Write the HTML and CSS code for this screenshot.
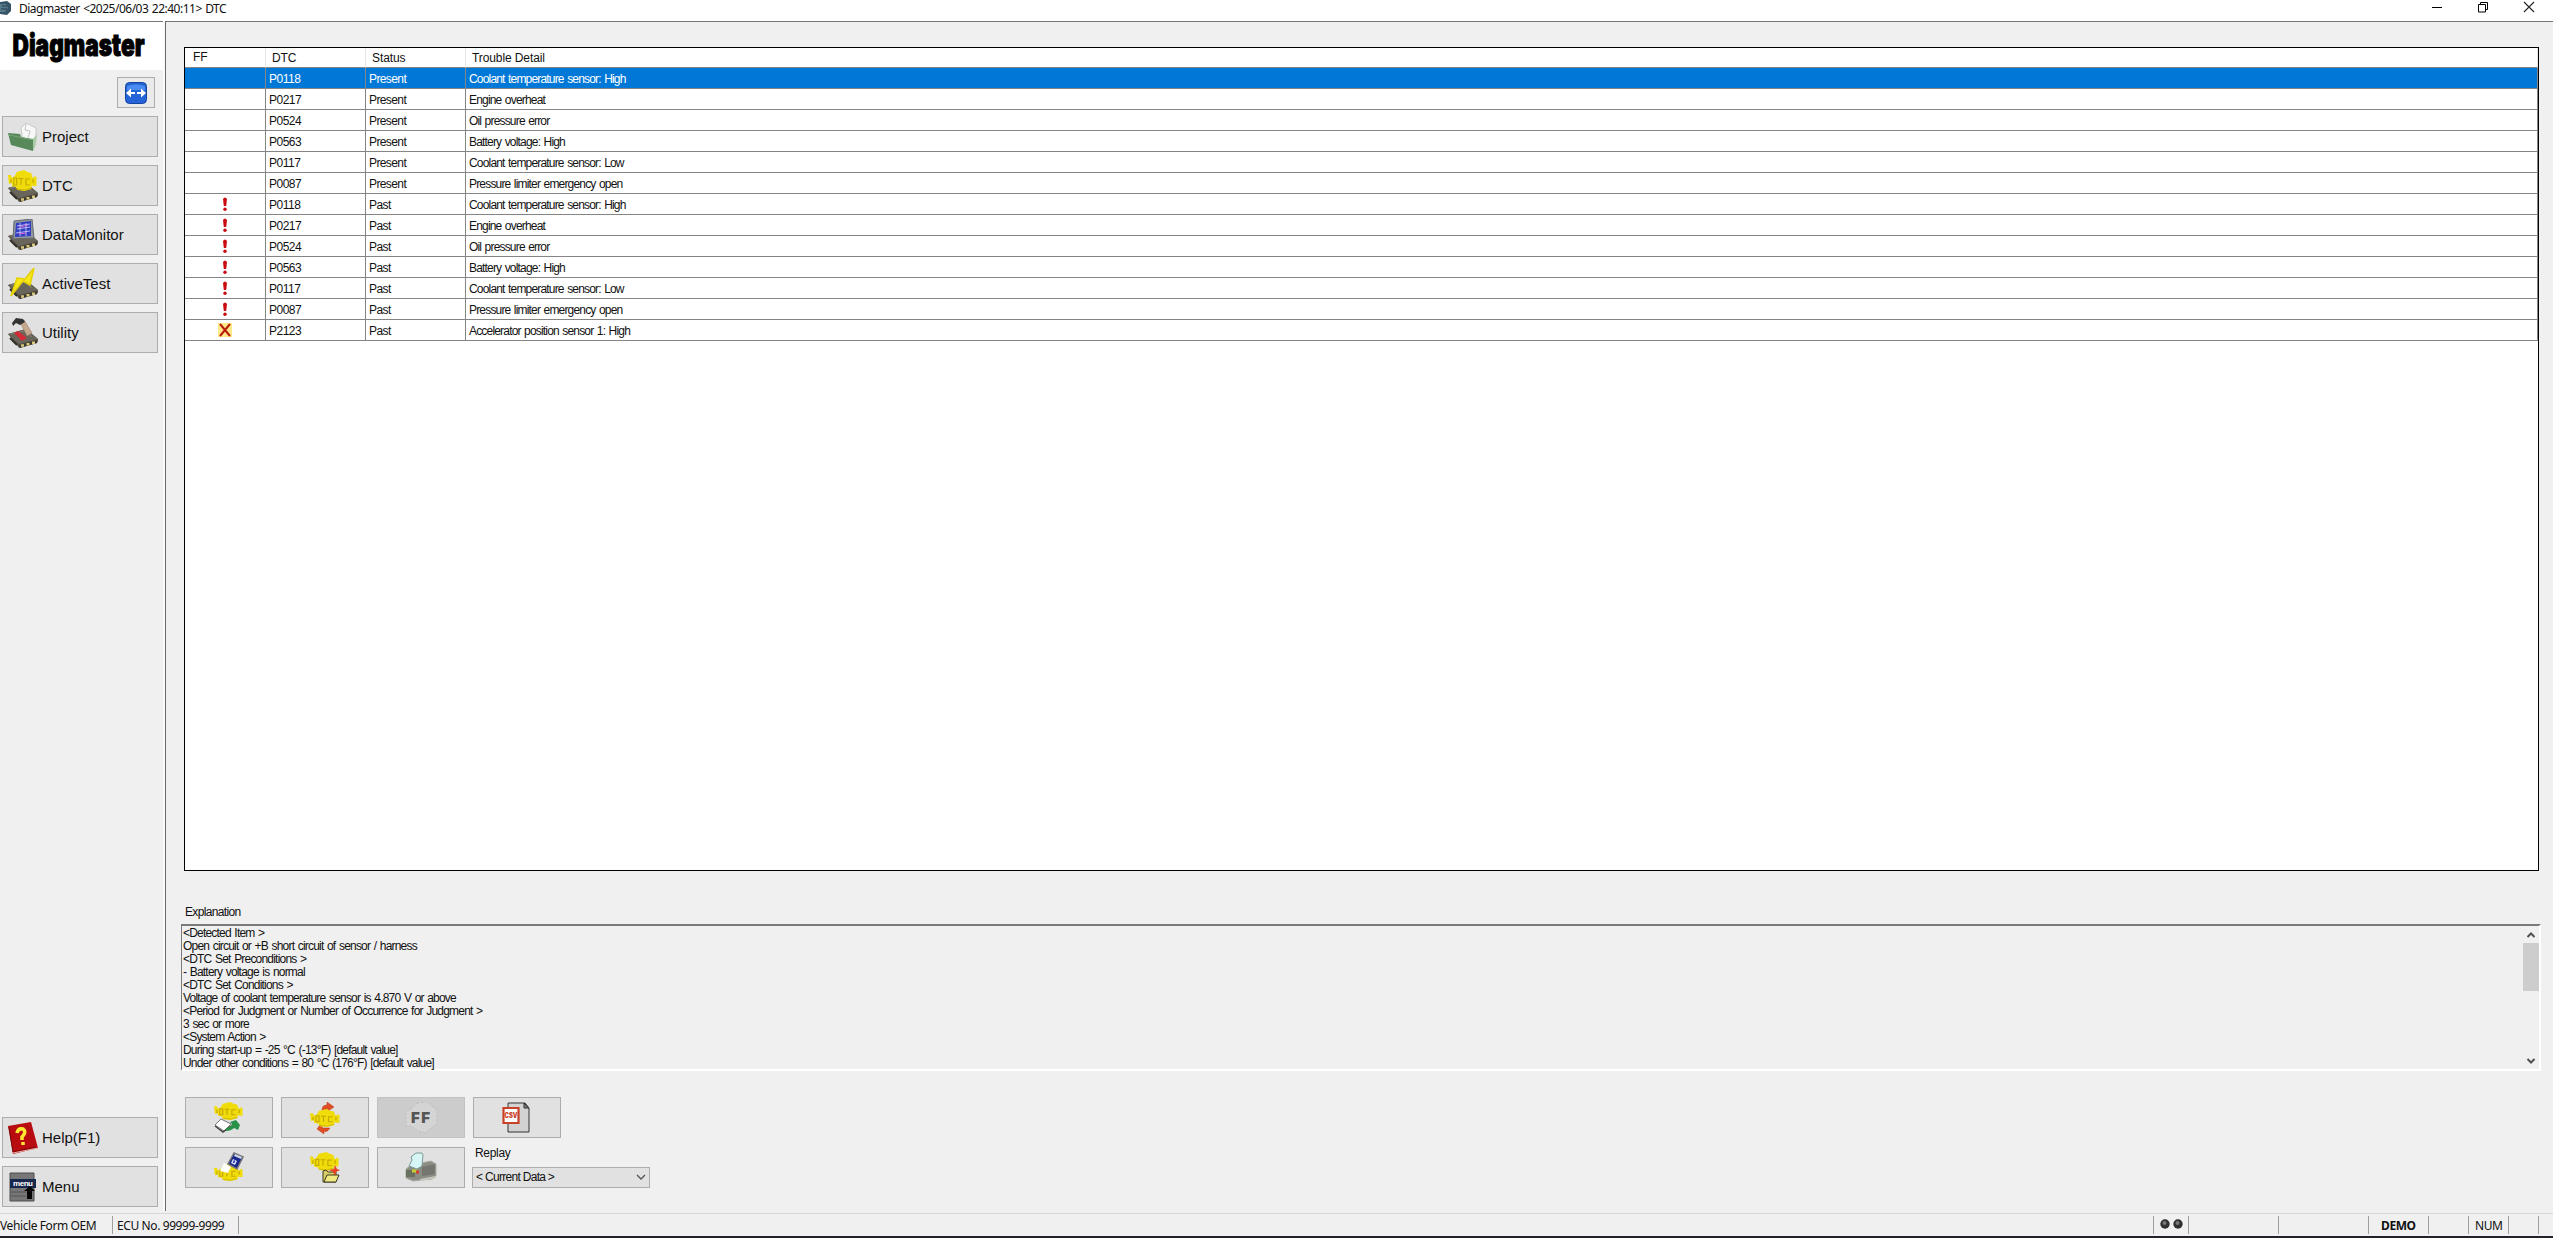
FILE: index.html
```html
<!DOCTYPE html>
<html lang="en">
<head>
<meta charset="utf-8">
<title>Diagmaster</title>
<link rel="stylesheet" href="styles.css">
</head>
<body>
<svg width="0" height="0" class="defs" aria-hidden="true">
  <defs>
    <symbol id="chip" viewBox="0 0 30 32">
      <path d="M0 17L18 12L30 22L29 26L11 31L9 28Z" fill="#575248"/>
      <path d="M0 17L18 12L30 22L11 27Z" fill="#69655b"/>
      <path d="M3 17L17 14L24 20" fill="none" stroke="#8a8578" stroke-width=".8"/>
      <path d="M11 28L30 23L29 26L12 31Z" fill="#3d382e"/>
      <path d="M13 28.500h3M18.500 27.300h3M24 25.800h3" stroke="#d8c77a" stroke-width="2.600"/>
      <path d="M2 21L9 28" stroke="#302d28" stroke-width="2"/>
    </symbol>
    <symbol id="engine" viewBox="0 0 30 21" preserveAspectRatio="none">
      <path d="M9 2L17 0L20 2L24 3L25 7L27 8V6L29.500 7V16L26 16L25 15L24 19L17 21L10 20L8 17L4 16V13L1 14L0 5L3 5L4 8L7 6Z" fill="#f0dc0a"/>
      <path d="M3 9v4M6 8h3v7h-3zM11 8.500h5M13.500 8v7M22.500 9h-4v6h4M26 9v4" fill="none" stroke="#c5a800" stroke-width="1.200"/>
      <path d="M9 19L17 20L24 18" fill="none" stroke="#cdb600"/>
    </symbol>
    <symbol id="bang" viewBox="0 0 6 14">
      <path d="M1 2Q3-1 5 2L4.200 9H1.800Z" fill="#c90b12"/><circle cx="3" cy="12.200" r="1.700" fill="#c90b12"/>
    </symbol>
  </defs>
</svg>
<div class="window">
  <header class="titlebar">
    <svg class="app-icon" width="14" height="16" viewBox="0 0 14 16"><path d="M0 2L7 1L11 4V11L7 15L0 14Z" fill="#355566"/><path d="M0 4H6L8 8L5 12H0" fill="#587b8c"/><path d="M2 6H7M1 9H7" stroke="#263c4a"/></svg>
    <span class="title-text">Diagmaster &lt;2025/06/03 22:40:11&gt; DTC</span>
    <div class="window-controls">
      <svg width="12" height="12" viewBox="0 0 12 12"><path d="M1 6.500H11" stroke="#000"/></svg>
      <svg width="12" height="12" viewBox="0 0 12 12"><path d="M1.500 3.500H8.500V11H1.500ZM3.500 3V1.500H10.500V8.500H9" fill="none" stroke="#000"/></svg>
      <svg width="12" height="12" viewBox="0 0 12 12"><path d="M1 1L11 11M11 1L1 11" stroke="#222" stroke-width="1.100"/></svg>
    </div>
  </header>
  <div class="workspace">
    <nav class="sidebar">
      <div class="logo"><svg width="162" height="48"><text x="12.500" y="34" textLength="132" lengthAdjust="spacingAndGlyphs">Diagmaster</text></svg></div>
      <button class="expand"><svg width="22" height="22" viewBox="0 0 22 22"><rect x=".5" y=".5" width="21" height="21" rx="4" fill="#2463d8" stroke="#164299"/><path d="M2 4Q11 1 20 4V8H2Z" fill="#4a8bf1"/><path d="M1 11L6 6.500V10H10V12H6V15.500ZM21 11L16 6.500V10H12V12H16V15.500Z" fill="#fff"/></svg></button>
      <div class="nav-list">
        <button class="nav-button"><svg width="30" height="32" viewBox="0 0 30 32"><path d="M13 7L18 2L28 7V24L15 20Z" fill="#f8f8f8" stroke="#c6cbc5"/><path d="M18 3L17 9L22 10L20 17" fill="none" stroke="#c4c4c4"/><path d="M0 12L12 13L13 16L25 18V30L3 24Z" fill="#57895a"/><path d="M25 18L29 13L27 26L25 30Z" fill="#a8c9a6"/><path d="M1 14L25 19" stroke="#79a678"/></svg><span>Project</span></button>
        <button class="nav-button"><svg width="30" height="32" viewBox="0 0 30 32"><use href="#chip" y="1" width="30" height="32"/><use href="#engine" width="29" height="21"/></svg><span>DTC</span></button>
        <button class="nav-button"><svg width="30" height="32" viewBox="0 0 30 32"><use href="#chip" width="30" height="32"/><path d="M6 2L24 0L26 19L5 20Z" fill="#8f969c" stroke="#656b70"/><path d="M8 4L23 2V17L7 18Z" fill="#313ec1"/><path d="M9 7L22 5M9 10L22 8M8 14L22 12M12 4V17M18 4V17" stroke="#d6d4ff" stroke-width=".8"/><path d="M12 8L20 6M11 15L18 14" stroke="#e164d5"/></svg><span>DataMonitor</span></button>
        <button class="nav-button"><svg width="30" height="32" viewBox="0 0 30 32"><use href="#chip" width="30" height="32"/><path d="M26 0L22 17L15 13L3 28L9 10L17 11Z" fill="#f8e71b" stroke="#e5d000" stroke-width="1.500"/></svg><span>ActiveTest</span></button>
        <button class="nav-button"><svg width="30" height="32" viewBox="0 0 30 32"><use href="#chip" width="30" height="32"/><path d="M6 16L10 14L19 21L14 24Z" fill="#d22b35"/><path d="M12 5L16 3L24 16L19 19Z" fill="#c5a98e" stroke="#987966" stroke-width=".6"/><path d="M4 6L8 1L15 2L17 5L12 8L8 6L5 9Z" fill="#333"/></svg><span>Utility</span></button>
      </div>
      <div class="nav-list nav-bottom">
        <button class="nav-button"><svg width="30" height="32" viewBox="0 0 30 32"><path d="M0 4L23 0L30 26L5 32Z" fill="#b90c11"/><path d="M1 5L5 30L28 25" fill="none" stroke="#7b0708"/><path d="M5 31L30 26" stroke="#e8b1a8"/><path d="M9 11Q10 6 15 7Q19 10 14 15V18M15 20V23" fill="none" stroke="#ffe733" stroke-width="3.500"/></svg><span>Help(F1)</span></button>
        <button class="nav-button"><svg width="30" height="32" viewBox="0 0 30 32"><path d="M2 2H26V30H2Z" fill="#777" stroke="#4c4c4c"/><path d="M3 21H18M3 25H18" stroke="#555"/><path d="M2 8H28V17H2Z" fill="#18284c"/><text class="menu-icon-text" x="5" y="14.500" textLength="20">menu</text><path d="M22 15L27 20H24V28H19V20H16Z" fill="#050505"/></svg><span>Menu</span></button>
      </div>
    </nav>
    <main class="content">
      <section class="dtc-table">
        <div class="row head"><span>FF</span><span>DTC</span><span>Status</span><span>Trouble Detail</span></div>
        <div class="row selected"><span></span><span>P0118</span><span>Present</span><span>Coolant temperature sensor: High</span></div>
        <div class="row"><span></span><span>P0217</span><span>Present</span><span>Engine overheat</span></div>
        <div class="row"><span></span><span>P0524</span><span>Present</span><span>Oil pressure error</span></div>
        <div class="row"><span></span><span>P0563</span><span>Present</span><span>Battery voltage: High</span></div>
        <div class="row"><span></span><span>P0117</span><span>Present</span><span>Coolant temperature sensor: Low</span></div>
        <div class="row"><span></span><span>P0087</span><span>Present</span><span>Pressure limiter emergency open</span></div>
        <div class="row"><span><svg width="6" height="14"><use href="#bang"/></svg></span><span>P0118</span><span>Past</span><span>Coolant temperature sensor: High</span></div>
        <div class="row"><span><svg width="6" height="14"><use href="#bang"/></svg></span><span>P0217</span><span>Past</span><span>Engine overheat</span></div>
        <div class="row"><span><svg width="6" height="14"><use href="#bang"/></svg></span><span>P0524</span><span>Past</span><span>Oil pressure error</span></div>
        <div class="row"><span><svg width="6" height="14"><use href="#bang"/></svg></span><span>P0563</span><span>Past</span><span>Battery voltage: High</span></div>
        <div class="row"><span><svg width="6" height="14"><use href="#bang"/></svg></span><span>P0117</span><span>Past</span><span>Coolant temperature sensor: Low</span></div>
        <div class="row"><span><svg width="6" height="14"><use href="#bang"/></svg></span><span>P0087</span><span>Past</span><span>Pressure limiter emergency open</span></div>
        <div class="row"><span><svg width="14" height="14" viewBox="0 0 14 14"><path d="M0 0H14V14H0Z" fill="#ffe888"/><path d="M2 1L12 13M12 1L2 13" stroke="#b91a0b" stroke-width="2"/></svg></span><span>P2123</span><span>Past</span><span>Accelerator position sensor 1: High</span></div>
      </section>
      <h2 class="explanation-label">Explanation</h2>
      <section class="explanation">
        <div class="explanation-text">
          <p>&lt;Detected Item &gt;</p>
          <p>Open circuit or +B short circuit of sensor / harness</p>
          <p>&lt;DTC Set Preconditions &gt;</p>
          <p>- Battery voltage is normal</p>
          <p>&lt;DTC Set Conditions &gt;</p>
          <p>Voltage of coolant temperature sensor is 4.870 V or above</p>
          <p>&lt;Period for Judgment or Number of Occurrence for Judgment &gt;</p>
          <p>3 sec or more</p>
          <p>&lt;System Action &gt;</p>
          <p>During start-up = -25 °C (-13°F) [default value]</p>
          <p>Under other conditions = 80 °C (176°F) [default value]</p>
        </div>
        <div class="scrollbar">
          <svg width="16" height="17" viewBox="0 0 16 17"><path d="M4.500 11L8 7.500L11.500 11" fill="none" stroke="#505050" stroke-width="2"/></svg>
          <div class="thumb"></div>
          <svg width="16" height="17" viewBox="0 0 16 17"><path d="M4.500 7L8 10.500L11.500 7" fill="none" stroke="#505050" stroke-width="2"/></svg>
        </div>
      </section>
      <div class="toolbar">
        <button class="tool"><svg width="30" height="32" viewBox="0 0 30 32"><use href="#engine" width="29" height="18"/><path d="M1 23L7 17L17 22L10 29Z" fill="#fff" stroke="#777"/><path d="M1 24L9 30L17 24" fill="none" stroke="#444" stroke-width="1.500"/><path d="M12 26Q16 26 18 22L16 20L22 18L26 23L24 28L20 26Q17 29 12 29Z" fill="#289348"/></svg></button>
        <button class="tool"><svg width="30" height="32" viewBox="0 0 30 32"><path d="M12 8Q12 3 17 3V0L24 5L18 9V7ZM20 26Q17 31 14 29V32L7 27L10 23L13 26Z" fill="#df4e24" stroke="#b9381b" stroke-width=".5"/><use href="#engine" y="7" width="30" height="18"/></svg></button>
        <button class="tool disabled"><svg width="38" height="32" viewBox="0 0 38 32"><path d="M15 1L25 0L31 5L35 8V22L29 26L24 31L16 29L9 24L4 24L4 10L9 7Z" fill="#d4d4d4" stroke="#bdbdbd" stroke-dasharray="2 2"/><text class="ff-icon-text" x="9" y="20.500" textLength="19">FF</text></svg></button>
        <button class="tool"><svg width="30" height="32" viewBox="0 0 30 32"><path d="M6 1H23L27 6V30H6Z" fill="#d2d2d2" stroke="#333"/><path d="M22 1V6H27Z" fill="#777" stroke="#333"/><path d="M1.500 6H16.500V21H1.500Z" fill="#fff" stroke="#c84126" stroke-width="2.200"/><text class="csv-icon-text" x="2.500" y="16" textLength="13" lengthAdjust="spacingAndGlyphs">CSV</text></svg></button>
        <button class="tool"><svg width="30" height="32" viewBox="0 0 30 32"><use href="#engine" y="12" width="29" height="17"/><path d="M6 19L10 11L17 15L14 21Z" fill="#fff"/><path d="M20 1L29 5L23 17L14 12Z" fill="#17278e" stroke="#777" stroke-width="1.500"/><path d="M21 2L28 5L27 7L20 4Z" fill="#ccd3e8"/><path d="M19 7L23 9L21 13L17 11Z" fill="#dbe3ff"/><path d="M20.500 8.500L19.500 11" stroke="#17278e" stroke-width="1.500"/></svg></button>
        <button class="tool"><svg width="30" height="32" viewBox="0 0 30 32"><use href="#engine" width="29" height="19"/><path d="M13 19L16 18L18 20H26V30H13Z" fill="#d6ce65" stroke="#3c3a21"/><path d="M14 30L17 23H29L26 30Z" fill="#f0e982" stroke="#3c3a21"/><path d="M25 13L27 17L30 18L26 20L25 24L23 20L19 18L24 17Z" fill="#e7441f"/></svg></button>
        <button class="tool"><svg width="32" height="32" viewBox="0 0 32 32"><path d="M1 17L6 13L26 9L31 12V24L27 27L8 29L1 26Z" fill="#8b8d85" stroke="#aaaca5"/><path d="M4 14L7 8L6 5L11 1H17L18 3L17 14L12 17Z" fill="#d5f6f5" stroke="#7f9998"/><path d="M17 15L30 12V22L17 24Z" fill="#74766f"/><path d="M1 18H10V25H1Z" fill="#68705f"/><path d="M7 19H12" stroke="#c8cf2e" stroke-width="3"/><path d="M11 20H14" stroke="#d03e30" stroke-width="3"/><path d="M15 28L31 25" stroke="#c6c8c0" stroke-width="2"/></svg></button>
        <div class="replay"><label>Replay</label><div class="select"><span>&lt; Current Data &gt;</span><svg width="10" height="7" viewBox="0 0 10 7"><path d="M1 1L5 5L9 1" fill="none" stroke="#555" stroke-width="1.300"/></svg></div></div>
      </div>
    </main>
  </div>
  <footer class="statusbar">
    <span class="cell vehicle">Vehicle Form OEM</span><span class="cell ecu">ECU No. 99999-9999</span><span class="cell filler"></span>
    <span class="cell lamps"><svg width="24" height="10" viewBox="0 0 24 10"><circle cx="5" cy="5" r="4.700" fill="#303030"/><circle cx="18" cy="5" r="4.700" fill="#303030"/><circle cx="4.500" cy="4" r="2" fill="#777"/><circle cx="17.500" cy="4" r="2" fill="#777"/></svg></span>
    <span class="cell w90"></span><span class="cell w90"></span><span class="cell demo">DEMO</span><span class="cell w40"></span><span class="cell num">NUM</span><span class="cell w30"></span><span class="cell last"></span>
  </footer>
</div>
</body>
</html>
```
FILE: styles.css
```css
* { box-sizing: border-box; }
body { margin: 0; background: #f0f0f0; color: #111; font: 12px/13px "Liberation Sans", sans-serif; overflow: hidden; }
button { margin: 0; border: 1px solid #adadad; border-radius: 0; background: #e1e1e1; padding: 0; color: #111; font-family: inherit; }
svg { display: block; flex: none; }
p, h2 { margin: 0; font-size: inherit; font-weight: 400; }
.defs { position: absolute; }
.window { width: 2553px; height: 1238px; display: flex; flex-direction: column; }

.titlebar { height: 21px; flex: none; background: #fff; display: flex; align-items: flex-start; }
.title-text { margin: 1px 0 0 5px; font: 12px/16px "Noto Sans", sans-serif; letter-spacing: -.5px; word-spacing: .8px; white-space: nowrap; }
.window-controls { display: flex; gap: 34px; margin: 1px 18px 0 auto; }

.workspace { height: 1192px; display: flex; }
.sidebar { width: 166px; height: 1190px; flex: none; display: flex; flex-direction: column; border-right: 1px solid #696969; box-shadow: inset -2px 0 #fafafa; }
.logo { width: 163px; height: 49px; background: #fff; border-top: 1px solid #777; }
.logo svg { overflow: visible; }
.logo text { font: 900 30px/1 Inter, sans-serif; fill: #000; stroke: #000; stroke-width: 1px; }
.expand { width: 38px; height: 31px; margin: 7px 0 8px 117px; display: flex; align-items: center; justify-content: center; background: #eaeaea; }
.nav-list { display: flex; flex-direction: column; gap: 8px; margin-left: 2px; }
.nav-bottom { margin-top: auto; margin-bottom: 4px; }
.nav-button { width: 156px; height: 41px; padding-left: 5px; display: flex; align-items: center; gap: 4px; font-size: 15px; text-align: left; }
.menu-icon-text { font: 700 8px "Liberation Sans", sans-serif; fill: #fff; }

.content { flex: 1; min-width: 0; border-top: 1px solid #777; padding: 25px 12px 0 15px; display: flex; flex-direction: column; }
.dtc-table { width: 2355px; height: 824px; margin-left: 3px; background: #fff; border: 1px solid #000; flex: none; }
.row { display: grid; grid-template-columns: 81px 100px 100px 1fr; grid-template-rows: 100%; height: 21px; }
.row span { min-height: 0; border-right: 1px solid #858585; border-bottom: 1px solid #858585; padding: 0 0 0 3px; line-height: 22px; white-space: nowrap; letter-spacing: -.5px; }
.row span:nth-child(3) { letter-spacing: -.6px; }
.row span:nth-child(4) { letter-spacing: -.82px; word-spacing: .9px; }
.row span:first-child { display: flex; justify-content: center; align-items: center; padding: 0 1px 0 0; }
.row.head { height: 20px; }
.row.head span { padding-left: 6px; letter-spacing: -.1px; word-spacing: 0; border-right-color: #e5e5e5; line-height: 21px; }
.row.head span:first-child { justify-content: flex-start; padding-left: 8px; }
.row.selected span { background: #0078d7; color: #fff; }
.explanation-label { margin: 35px 0 0 4px; letter-spacing: -.65px; }
.explanation { height: 147px; margin-top: 5px; border: 2px solid #7a7a7a; border-right-color: #fff; border-bottom-color: #fff; border-left-width: 1px; display: flex; justify-content: space-between; flex: none; }
.explanation-text { padding: 1px 0 0 1px; letter-spacing: -.8px; word-spacing: 1px; white-space: nowrap; }
.scrollbar { width: 16px; height: 143px; display: flex; flex-direction: column; }
.thumb { height: 48px; background: #cdcdcd; margin-bottom: auto; }
.toolbar { display: grid; grid-template-columns: repeat(4, 88px); grid-auto-rows: 41px; gap: 9px 8px; margin: 26px 0 0 4px; }
.tool { display: flex; justify-content: center; align-items: center; }
.tool.disabled { background: #ccc; border-color: #c2c2c2; }
.ff-icon-text { font: 900 15px Inter, sans-serif; fill: #555; }
.csv-icon-text { font: 900 7px Inter, sans-serif; fill: #c84126; }
.replay { margin-left: -1px; width: 178px; letter-spacing: -.7px; }
.replay label { display: block; padding-left: 3px; margin-bottom: 7px; letter-spacing: -.3px; }
.select { height: 21px; border: 1px solid #adadad; background: #e1e1e1; display: flex; align-items: center; justify-content: space-between; padding: 0 3px; }

.statusbar { height: 25px; flex: none; display: flex; border-top: 1px solid #d9d9d9; border-bottom: 2px solid #24212a; padding: 2px 0; font: 12px/19px "Noto Sans", sans-serif; letter-spacing: -.4px; }
.cell { border-right: 1px solid #a0a0a0; white-space: nowrap; flex: none; }
.vehicle { width: 113px; }
.ecu { width: 126px; padding-left: 4px; }
.filler { flex: 1; }
.lamps { width: 35px; padding: 3px 0 0 6px; }
.w90 { width: 90px; }
.demo { width: 60px; padding-left: 12px; font-weight: 700; }
.w40 { width: 40px; }
.num { width: 40px; padding-left: 6px; }
.w30 { width: 30px; }
.last { width: 14px; border: 0; }
```
